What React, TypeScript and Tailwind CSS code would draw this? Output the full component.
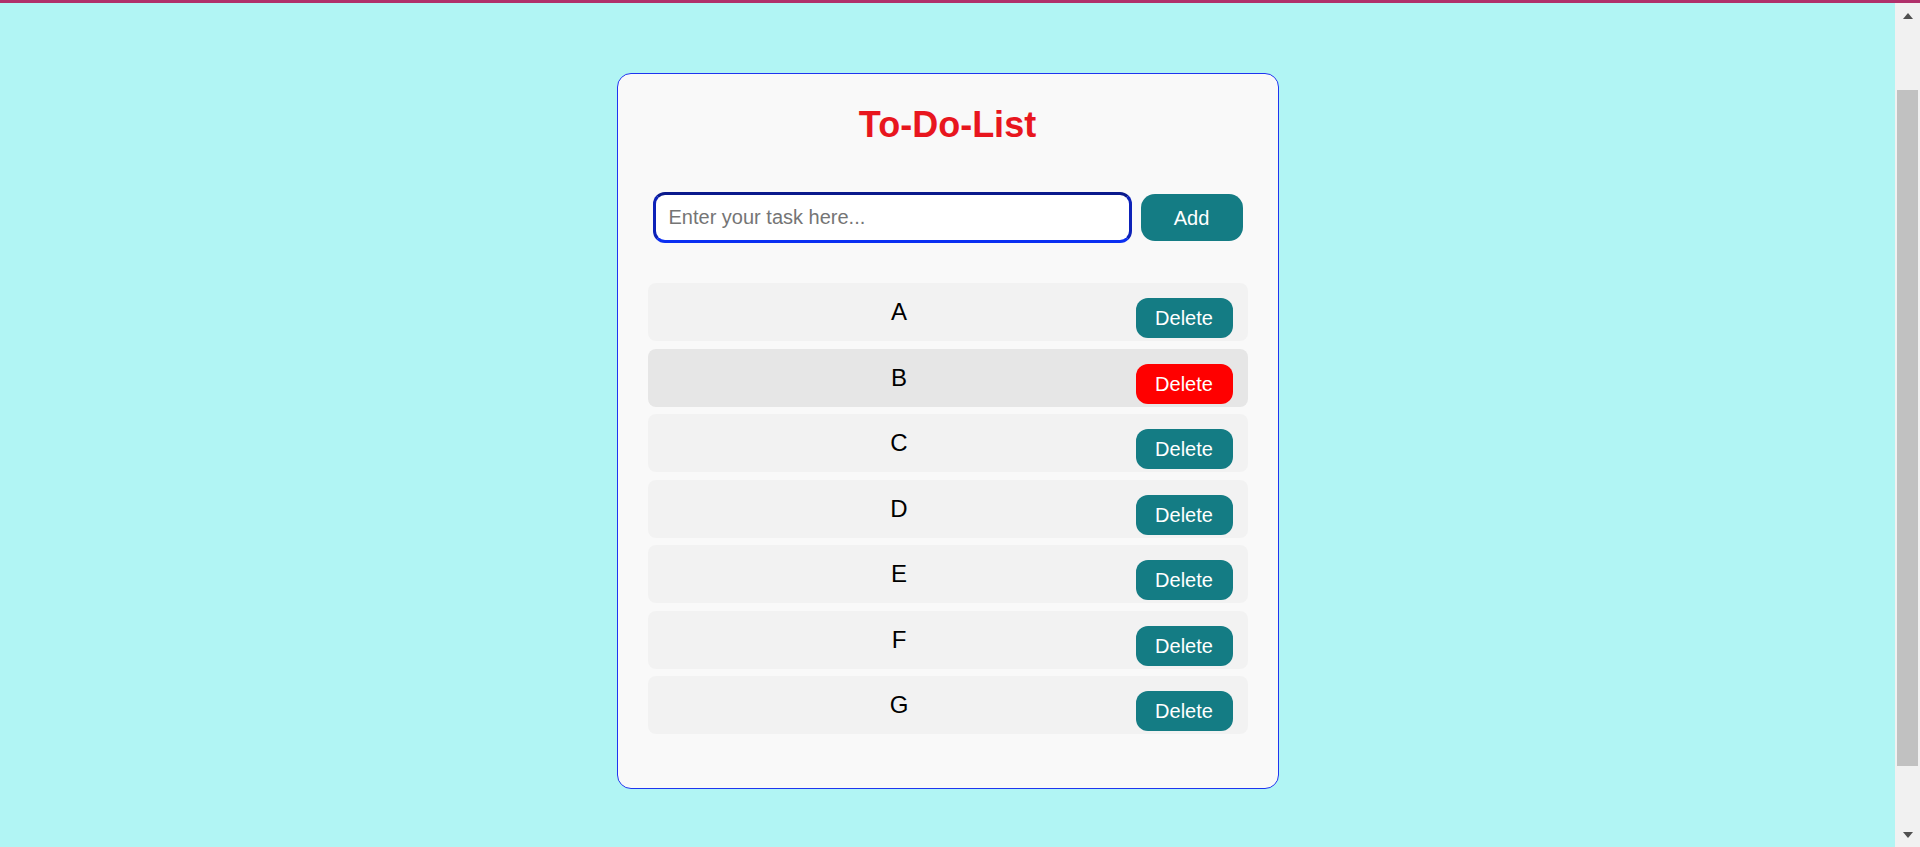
import { useState } from "react";

const initialTasks = ["A", "B", "C", "D", "E", "F", "G"];

const TaskRow = ({ label, hovered }: { label: string; hovered: boolean }) => {
  return (
    <div
      className={`flex h-[58px] rounded-[8px] px-[15px] ${hovered ? "bg-[#e6e6e6]" : "bg-[#f2f2f2]"}`}
    >
      <span className="flex-1 self-center text-center text-[24px] leading-none text-black">{label}</span>
      <button
        className={`mb-[3px] h-[40px] w-[97px] self-end rounded-[12px] text-[20px] text-white ${
          hovered ? "bg-[#ff0000]" : "bg-[#147c84]"
        }`}
      >
        Delete
      </button>
    </div>
  );
};

const FakeScrollbar = () => {
  return (
    <div className="flex w-[25px] flex-col bg-[#f1f1f1]">
      <div className="flex h-[17px] items-end justify-center pb-[1px]">
        <svg width="10" height="6" viewBox="0 0 10 6">
          <path d="M0 6 L5 0 L10 6 Z" fill="#505050" />
        </svg>
      </div>
      <div className="flex-1 px-[2px]">
        <div className="mt-[70px] h-[676px] bg-[#c1c1c1]" />
      </div>
      <div className="flex h-[17px] items-start justify-center pt-[2px]">
        <svg width="10" height="6" viewBox="0 0 10 6">
          <path d="M0 0 L5 6 L10 0 Z" fill="#505050" />
        </svg>
      </div>
    </div>
  );
};

export default function App() {
  const [tasks] = useState(initialTasks);
  const [text, setText] = useState("");

  return (
    <div className="flex h-[847px] flex-col overflow-hidden bg-[#b1f5f4] font-['Liberation_Sans',Arial,sans-serif]">
      <div className="h-[3px] bg-[#b0306a]" />
      <div className="flex flex-1">
        <main className="flex flex-1 justify-center">
          <div className="mt-[70px] h-[716px] w-[662px] rounded-[14px] border border-[#1f35f0] bg-[#f9f9f9] px-[30px] pt-[31px]">
            <h1 className="text-center text-[36px] font-bold leading-[40px] text-[#e8161e]">To-Do-List</h1>

            <div className="mt-[47px] flex items-center gap-[9px] px-[5px]">
              <input
                value={text}
                onChange={(e) => setText(e.target.value)}
                placeholder="Enter your task here..."
                className="h-[51px] flex-1 rounded-[12px] border-[3px] border-x-[#0d22b8] border-t-[#0a1a8c] border-b-[#0b2ff2] bg-white px-[13px] text-[20px] text-black outline-none placeholder:text-[#757575]"
              />
              <button className="h-[47px] w-[102px] rounded-[14px] bg-[#147c84] text-[20px] text-white">Add</button>
            </div>

            <div className="mt-[40px] flex flex-col gap-[7.5px]">
              {tasks.map((t) => (
                <TaskRow key={t} label={t} hovered={t === "B"} />
              ))}
            </div>
          </div>
        </main>
        <FakeScrollbar />
      </div>
    </div>
  );
}
